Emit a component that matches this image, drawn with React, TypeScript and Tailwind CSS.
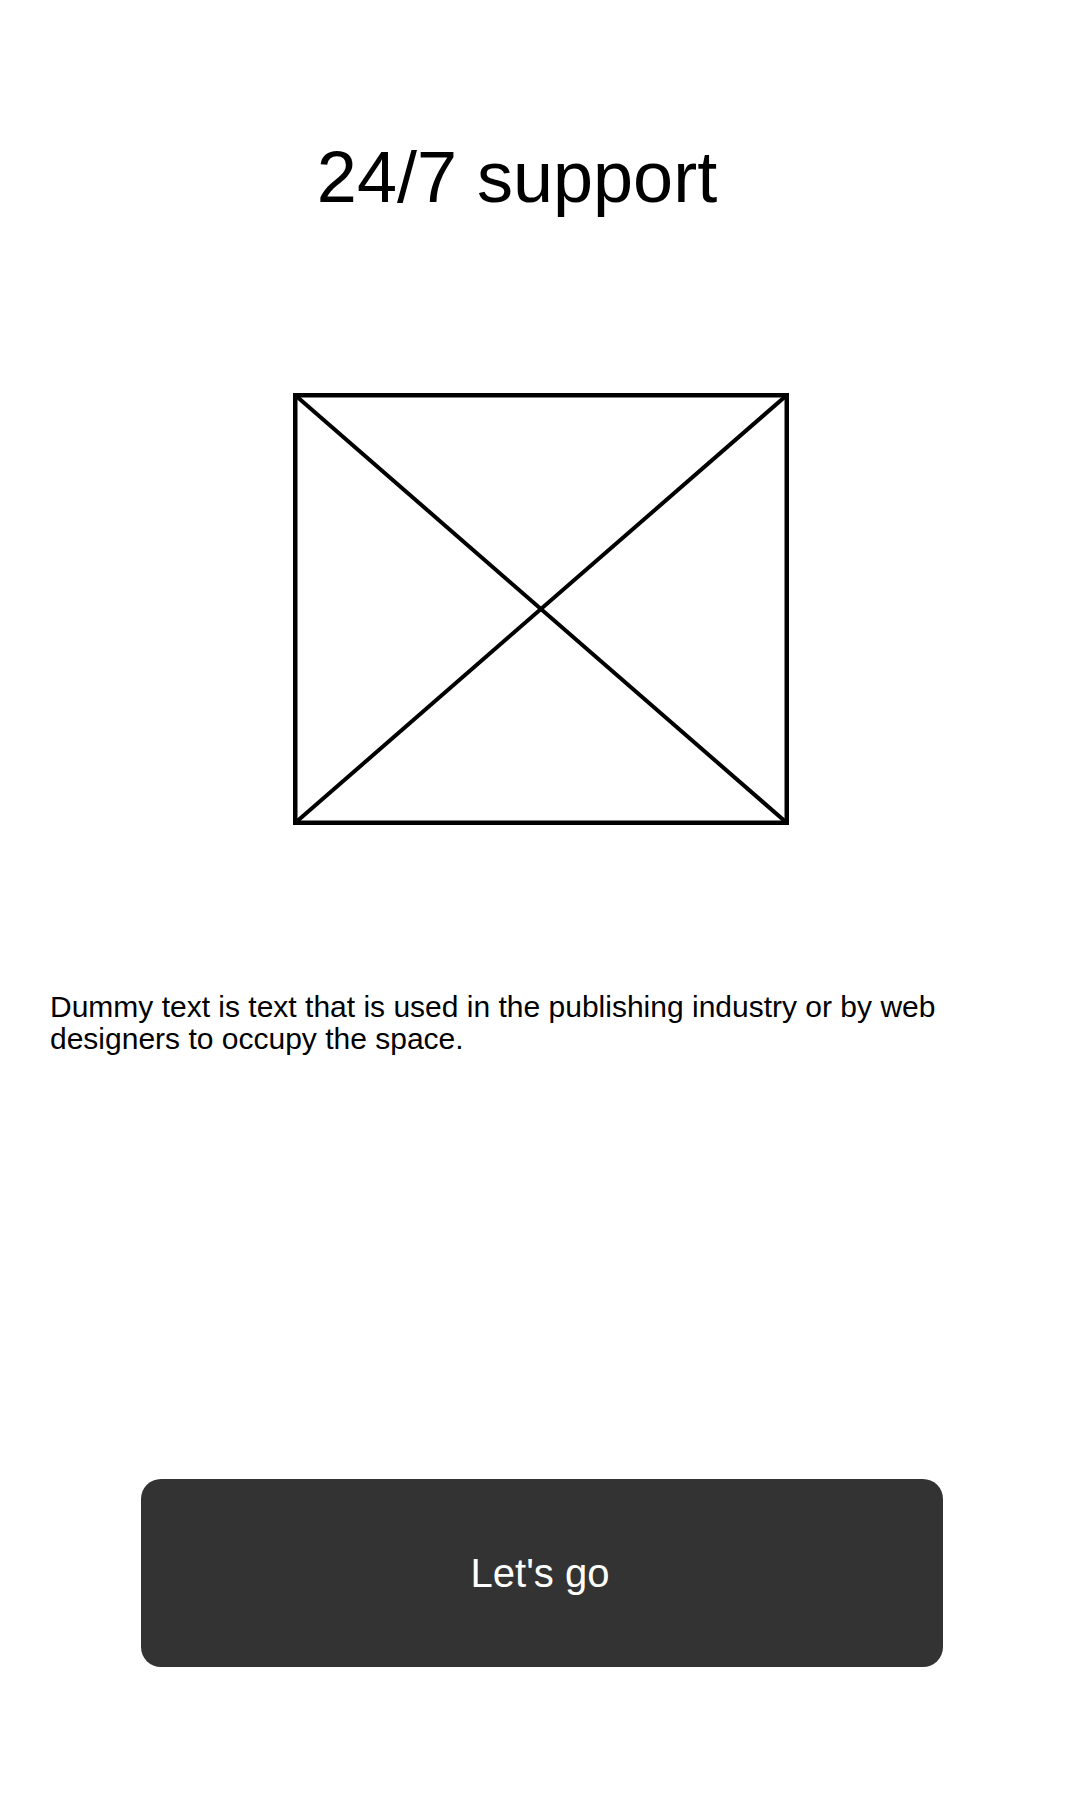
const PlaceholderImage = () => (
  <svg width="496" height="432" viewBox="0 0 496 432" className="block">
    <rect x="2.25" y="2.25" width="491.5" height="427.5" fill="none" stroke="#000" strokeWidth="4.5" />
    <line x1="2" y1="2" x2="494" y2="430" stroke="#000" strokeWidth="4" />
    <line x1="494" y1="2" x2="2" y2="430" stroke="#000" strokeWidth="4" />
  </svg>
);

const App = () => {
  return (
    <div
      className="w-[1080px] h-[1800px] bg-white flex flex-col items-center text-black"
      style={{ fontFamily: '"Liberation Sans", Arial, sans-serif' }}
    >
      <div className="w-full flex justify-center pr-[46px] mt-[137px]">
        <h1 className="text-[72px] leading-[80px] font-normal">24/7 support</h1>
      </div>

      <div className="mt-[176px] ml-[2px]">
        <PlaceholderImage />
      </div>

      <p className="w-full px-[50px] mt-[166px] text-[30px] leading-[32px]">
        Dummy text is text that is used in the publishing industry or by web designers to occupy the space.
      </p>

      <button className="mt-[424px] ml-[4px] w-[802px] h-[188px] rounded-[20px] bg-[#333333] text-white text-[40px] pr-[4px] flex items-center justify-center">
        Let's go
      </button>
    </div>
  );
};

export default App;
